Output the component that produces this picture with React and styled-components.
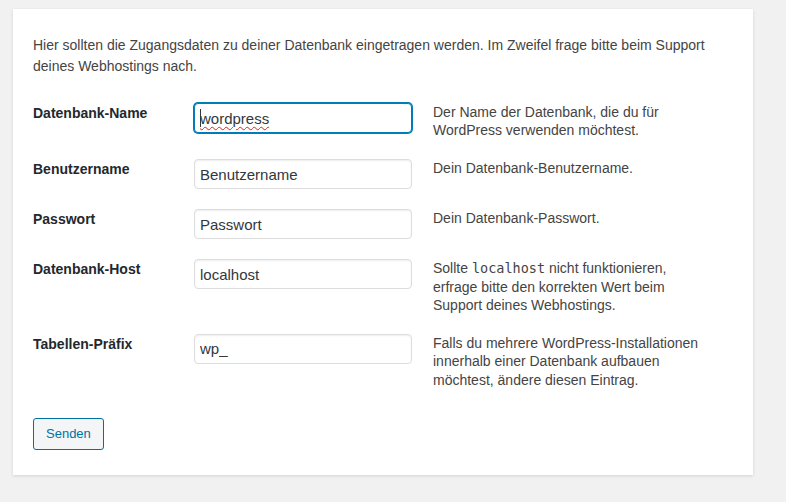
import React from 'react';
import styled, { createGlobalStyle } from 'styled-components';

const GlobalStyle = createGlobalStyle`
  html, body {
    margin: 0;
    padding: 0;
    background: #f1f1f1;
  }
  body {
    font-family: "Liberation Sans", Arial, sans-serif;
    color: #444;
  }
`;

const Page = styled.div`
  padding: 9px 33px 27px 13px;
  min-height: 502px;
  box-sizing: border-box;
`;

const Card = styled.form`
  width: 740px;
  box-sizing: border-box;
  background: #fff;
  box-shadow: 0 1px 3px rgba(0, 0, 0, 0.13);
  padding: 26px 20px 25px 20px;
`;

const Intro = styled.p`
  margin: 0 0 16px;
  font-size: 14px;
  line-height: 21px;
  color: #444;
`;

const FormTable = styled.div`
  display: grid;
  grid-template-columns: 161px 218px 296px;
`;

const Label = styled.label`
  padding: 11px 0 9px;
  font-size: 14px;
  font-weight: bold;
  line-height: 18px;
  color: #23282d;
`;

const Field = styled.div`
  position: relative;
  padding: 10px 0;
`;

const Input = styled.input`
  display: block;
  width: 218px;
  height: 30px;
  box-sizing: border-box;
  margin: 0;
  padding: 3px 5px;
  font-family: "Liberation Sans", Arial, sans-serif;
  font-size: 15px;
  line-height: 20px;
  color: #32373c;
  background: #fff;
  border: 1px solid ${p => (p.$focused ? '#007cba' : '#ddd')};
  border-radius: 4px;
  box-shadow: ${p => (p.$focused ? '0 0 0 1px #007cba' : 'inset 0 1px 2px rgba(0,0,0,0.07)')};
  outline: none;
`;

/* spell-check squiggle and caret drawn over the focused input */
const Squiggle = styled.span`
  position: absolute;
  left: 6px;
  top: 16px;
  font-family: "Liberation Sans", Arial, sans-serif;
  font-size: 15px;
  line-height: 20px;
  color: transparent;
  text-decoration: underline wavy #e2231a;
  text-decoration-thickness: 1px;
  text-underline-offset: 2px;
  pointer-events: none;
`;

const Caret = styled.span`
  position: absolute;
  left: 6px;
  top: 16px;
  width: 1px;
  height: 18px;
  background: #32373c;
  pointer-events: none;
`;

const Description = styled.div`
  padding: 10px 0 9.6px 21px;
  font-size: 14px;
  line-height: 18.34px;
  color: #444;
`;

const Code = styled.code`
  font-family: "DejaVu Sans Mono", "Liberation Mono", monospace;
  font-size: 13.5px;
  color: #444;
`;

const Submit = styled.div`
  padding-top: 19px;
`;

const Button = styled.button`
  height: 32px;
  padding: 0 12px;
  font-family: "Liberation Sans", Arial, sans-serif;
  font-size: 13px;
  color: #0071a1;
  background: #f3f5f6;
  border: 1px solid #0071a1;
  border-radius: 3px;
  cursor: pointer;
`;

const fields = [
  {
    id: 'dbname',
    label: 'Datenbank-Name',
    value: 'wordpress',
    focused: true,
    desc: 'Der Name der Datenbank, die du für WordPress verwenden möchtest.',
  },
  { id: 'uname', label: 'Benutzername', value: 'Benutzername', desc: 'Dein Datenbank-Benutzername.' },
  { id: 'pwd', label: 'Passwort', value: 'Passwort', desc: 'Dein Datenbank-Passwort.' },
  {
    id: 'dbhost',
    label: 'Datenbank-Host',
    value: 'localhost',
    desc: (
      <>
        Sollte <Code>localhost</Code> nicht funktionieren, erfrage bitte den korrekten Wert beim Support deines
        Webhostings.
      </>
    ),
  },
  {
    id: 'prefix',
    label: 'Tabellen-Präfix',
    value: 'wp_',
    desc: 'Falls du mehrere WordPress-Installationen innerhalb einer Datenbank aufbauen möchtest, ändere diesen Eintrag.',
  },
];

export default function App() {
  return (
    <>
      <GlobalStyle />
      <Page>
        <Card onSubmit={e => e.preventDefault()}>
          <Intro>
            Hier sollten die Zugangsdaten zu deiner Datenbank eingetragen werden. Im Zweifel frage bitte beim Support
            deines Webhostings nach.
          </Intro>
          <FormTable>
            {fields.map(f => (
              <React.Fragment key={f.id}>
                <Label htmlFor={f.id}>{f.label}</Label>
                <Field>
                  <Input
                    id={f.id}
                    type="text"
                    defaultValue={f.value}
                    $focused={f.focused}
                    spellCheck={false}
                  />
                  {f.focused && (
                    <>
                      <Squiggle aria-hidden="true">{f.value}</Squiggle>
                      <Caret aria-hidden="true" />
                    </>
                  )}
                </Field>
                <Description>{f.desc}</Description>
              </React.Fragment>
            ))}
          </FormTable>
          <Submit>
            <Button type="submit">Senden</Button>
          </Submit>
        </Card>
      </Page>
    </>
  );
}
